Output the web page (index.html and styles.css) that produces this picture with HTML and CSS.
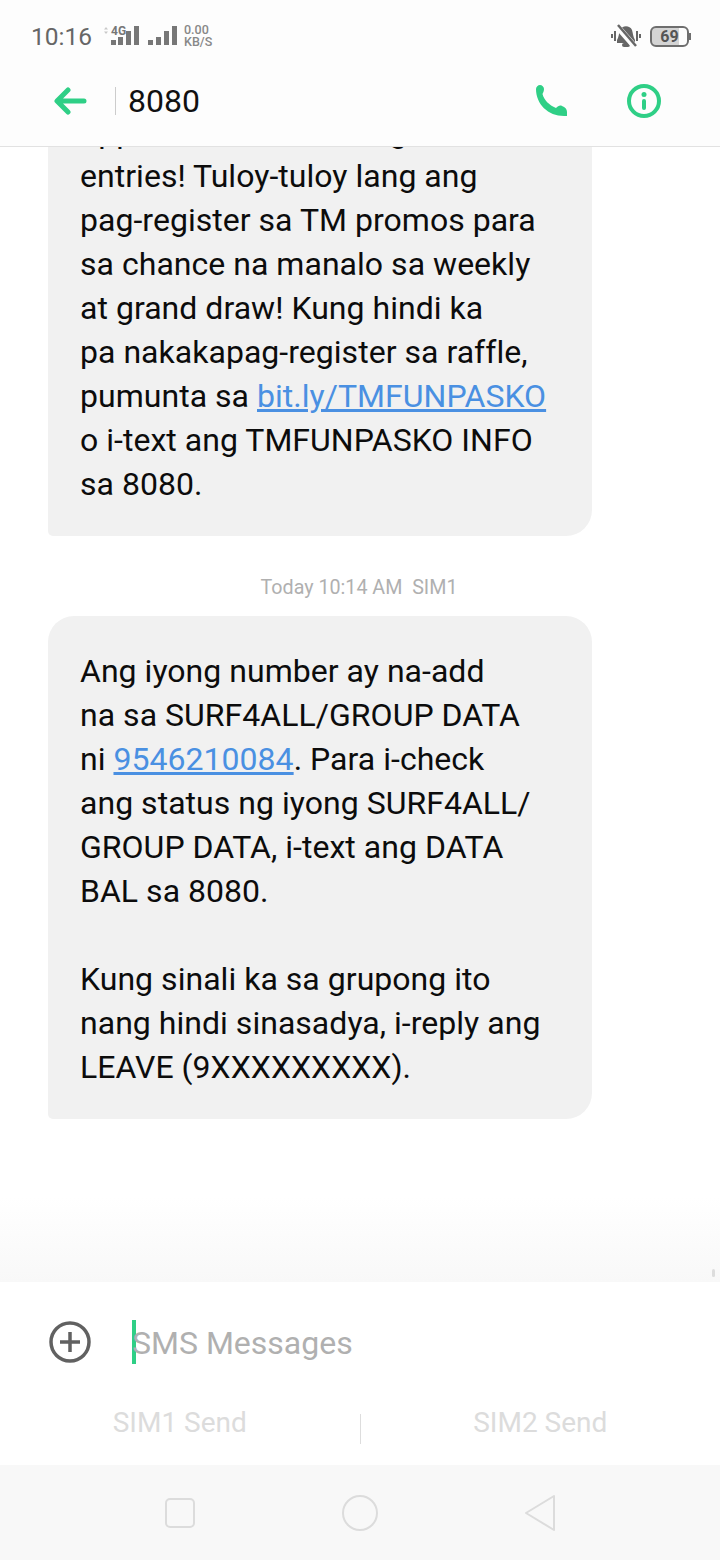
FILE: index.html
```html
<!DOCTYPE html>
<html lang="en">
<head>
    <meta charset="UTF-8">
    <meta name="viewport" content="width=device-width, initial-scale=1.0">
    <title>8080</title>
    <link rel="stylesheet" href="styles.css">
</head>
<body>

<div class="phone">
    <div class="status-bar">
        <span class="clock">10:16</span>
        <svg class="signal" width="82" height="24" viewBox="0 0 82 24">
            <path d="M4 5.500 6 3 8 5.500zM4 7.500 6 10 8 7.500z" fill="#c8c8c8"/>
            <g fill="#777">
                <rect x="11" y="16" width="5" height="5"/>
                <rect x="18" y="13" width="5" height="8"/>
                <rect x="26" y="7" width="5" height="14"/>
                <rect x="34" y="2" width="5" height="19"/>
                <rect x="48" y="16" width="5" height="5"/>
                <rect x="56" y="13" width="5" height="8"/>
                <rect x="64" y="7" width="5" height="14"/>
                <rect x="72" y="2" width="5" height="19"/>
            </g>
            <text x="11" y="11" class="net-type">4G</text>
        </svg>
        <div class="speed"><span>0.00</span><span>KB/S</span></div>
        <div class="status-right">
            <svg width="30" height="24" viewBox="0 0 30 24">
                <g fill="#666">
                    <path d="M6 16C8 13 8 8 9 6 11 1 19 1 21 6 22 9 22 13 24 16L24 19 6 19Z"/>
                    <rect x="11" y="19" width="8" height="4" rx="2"/>
                    <rect x="3" y="7" width="2" height="10"/>
                    <rect x="0" y="10" width="2" height="4"/>
                    <rect x="25" y="7" width="2" height="10"/>
                    <rect x="28" y="10" width="2" height="4"/>
                </g>
                <path d="M5 1 25 24" stroke="#fdfdfd" stroke-width="6"/>
                <path d="M7 1 25 22" stroke="#666" stroke-width="2.500"/>
            </svg>
            <div class="battery"><span>69</span></div>
        </div>
    </div>

    <div class="top-bar">
        <svg class="back" width="34" height="28" viewBox="0 0 34 28">
            <path d="M15 3 4 14 15 25M5 14H31" fill="none" stroke="#2fcf86" stroke-width="5" stroke-linecap="round" stroke-linejoin="round"/>
        </svg>
        <span class="divider"></span>
        <span class="contact">8080</span>
        <svg class="phone-icon" width="34" height="34" viewBox="0 0 34 34">
            <path d="M2 5C2 3 4 1 6 1 8 1 10 3 10 5 10 7 9 9 8.500 10 10 16 15 21 22 24 24 22 26 21 28 22 31 23 33 25 33 28L33 32 30 32C14 32 2 20 2 5Z" fill="#2fcf86"/>
        </svg>
        <svg class="info-icon" width="34" height="34" viewBox="0 0 34 34">
            <circle cx="17" cy="17" r="15" fill="none" stroke="#2fcf86" stroke-width="4"/>
            <circle cx="17" cy="10.500" r="2.500" fill="#2fcf86"/>
            <rect x="15" y="15" width="4" height="11" rx="2" fill="#2fcf86"/>
        </svg>
    </div>

    <div class="messages">
        <div class="bubble">
            <p>opportunities to win ng<br>entries! Tuloy-tuloy lang ang<br>pag-register sa TM promos para<br>sa chance na manalo sa weekly<br>at grand draw! Kung hindi ka<br>pa nakakapag-register sa raffle,<br>pumunta sa <a href="#">bit.ly/TMFUNPASKO</a><br>o i-text ang TMFUNPASKO INFO<br>sa 8080.</p>
        </div>
        <div class="timestamp">Today 10:14 AM&nbsp; SIM1</div>
        <div class="bubble">
            <p>Ang iyong number ay na-add<br>na sa SURF4ALL/GROUP DATA<br>ni <a href="#">9546210084</a>. Para i-check<br>ang status ng iyong SURF4ALL/<br>GROUP DATA, i-text ang DATA<br>BAL sa 8080.<br><br>Kung sinali ka sa grupong ito<br>nang hindi sinasadya, i-reply ang<br>LEAVE (9XXXXXXXXX).</p>
        </div>
        <span class="scroll-mark"></span>
    </div>

    <div class="composer">
        <div class="input-row">
            <svg class="plus" width="42" height="42" viewBox="0 0 42 42">
                <circle cx="21" cy="21" r="19" fill="none" stroke="#616161" stroke-width="3.500"/>
                <path d="M21 11V31M11 21H31" stroke="#616161" stroke-width="3.500"/>
            </svg>
            <div class="field"><span class="caret"></span><span class="placeholder">SMS Messages</span></div>
        </div>
        <div class="send-row">
            <span class="send">SIM1 Send</span>
            <span class="send-sep"></span>
            <span class="send">SIM2 Send</span>
        </div>
    </div>

    <div class="nav-bar">
        <svg width="32" height="32" viewBox="0 0 32 32">
            <rect x="2" y="2" width="28" height="28" rx="4" fill="none" stroke="#dcdcdc" stroke-width="2"/>
        </svg>
        <svg width="38" height="38" viewBox="0 0 38 38">
            <circle cx="19" cy="19" r="17" fill="none" stroke="#dcdcdc" stroke-width="2"/>
        </svg>
        <svg width="34" height="38" viewBox="0 0 34 38">
            <path d="M31 2 3 19 31 36Z" fill="none" stroke="#dcdcdc" stroke-width="2" stroke-linejoin="round"/>
        </svg>
    </div>
</div>

</body>
</html>
```

FILE: styles.css
```css
/* General Styling */
* {
    margin: 0;
    padding: 0;
    box-sizing: border-box;
}

body {
    font-family: Roboto, sans-serif;
    background: #fff;
}

.phone {
    width: 720px;
    height: 1560px;
    display: flex;
    flex-direction: column;
    overflow: hidden;
}

/* Status Bar */
.status-bar {
    height: 68px;
    padding: 4px 31px 0 31px;
    display: flex;
    align-items: center;
    background: #fdfdfd;
}

.clock {
    font-size: 24.500px;
    color: #666;
    margin-right: 8px;
}

.net-type {
    font-family: Roboto, sans-serif;
    font-size: 12px;
    font-weight: 700;
    fill: #777;
}

.speed {
    display: flex;
    flex-direction: column;
    font-size: 12.500px;
    font-weight: 500;
    line-height: 12px;
    color: #888;
    margin-left: 2px;
}

.status-right {
    margin-left: auto;
    display: flex;
    align-items: center;
    gap: 9px;
}

.battery {
    position: relative;
    width: 39px;
    height: 21px;
    border: 2px solid #6e6e6e;
    border-radius: 6px;
    background: linear-gradient(90deg, #d4d4d4 76%, #fdfdfd 76%);
    display: flex;
    align-items: center;
    justify-content: center;
    font-size: 16px;
    font-weight: 700;
    color: #555;
}

.battery::after {
    content: "";
    position: absolute;
    right: -4px;
    top: 5px;
    width: 2px;
    height: 7px;
    background: #6e6e6e;
}

/* Header */
.top-bar {
    height: 79px;
    display: flex;
    align-items: center;
    padding: 0 0 12px 53px;
    background: #fdfdfd;
    border-bottom: 1px solid #e2e2e2;
}

.divider {
    width: 1px;
    height: 28px;
    background: #ccc;
    margin: 0 12px 0 28px;
}

.contact {
    font-size: 32px;
    color: #111;
}

.phone-icon {
    margin-left: auto;
}

.info-icon {
    margin: 0 59px 0 59px;
}

/* Messages */
.messages {
    position: relative;
    flex: 1;
    min-height: 0;
    display: flex;
    flex-direction: column;
    justify-content: flex-end;
    padding: 0 128px 163px 48px;
    overflow: hidden;
    background: linear-gradient(180deg, #fff 1050px, #f8f8f8 100%);
}

.bubble {
    flex: none;
    background: #f1f1f1;
    border-radius: 26px 26px 26px 5px;
    padding: 33px 32px 30px;
    font-size: 32px;
    line-height: 44px;
    letter-spacing: 0.030px;
    color: #0c0c0c;
}

.bubble a {
    color: #4a90e2;
}

.timestamp {
    flex: none;
    height: 80px;
    padding-top: 40px;
    text-align: center;
    font-size: 19.700px;
    line-height: 24px;
    color: #b0b0b0;
    margin-right: -78px;
}

.scroll-mark {
    position: absolute;
    right: 5px;
    bottom: 5px;
    width: 3px;
    height: 8px;
    border-radius: 2px;
    background: #ddd;
}

/* Composer */
.composer {
    height: 183px;
    background: #fff;
}

.input-row {
    height: 120px;
    padding: 0 0 0 49px;
    display: flex;
    align-items: center;
}

.field {
    margin-left: 41px;
    display: flex;
    align-items: center;
}

.caret {
    width: 4px;
    height: 44px;
    background: #2fcf86;
}

.placeholder {
    font-size: 32px;
    color: #b0b0b0;
    margin: 2px 0 0 -4px;
}

.send-row {
    display: flex;
    align-items: center;
    height: 40px;
}

.send {
    flex: 1;
    text-align: center;
    font-size: 28px;
    color: #dcdcdc;
}

.send-sep {
    width: 1px;
    height: 30px;
    background: #ddd;
    margin-top: 14px;
}

/* Nav Bar */
.nav-bar {
    height: 95px;
    background: #f8f8f8;
    display: grid;
    grid-template-columns: 180px 180px 180px;
    justify-content: center;
    justify-items: center;
    align-items: center;
}
```
